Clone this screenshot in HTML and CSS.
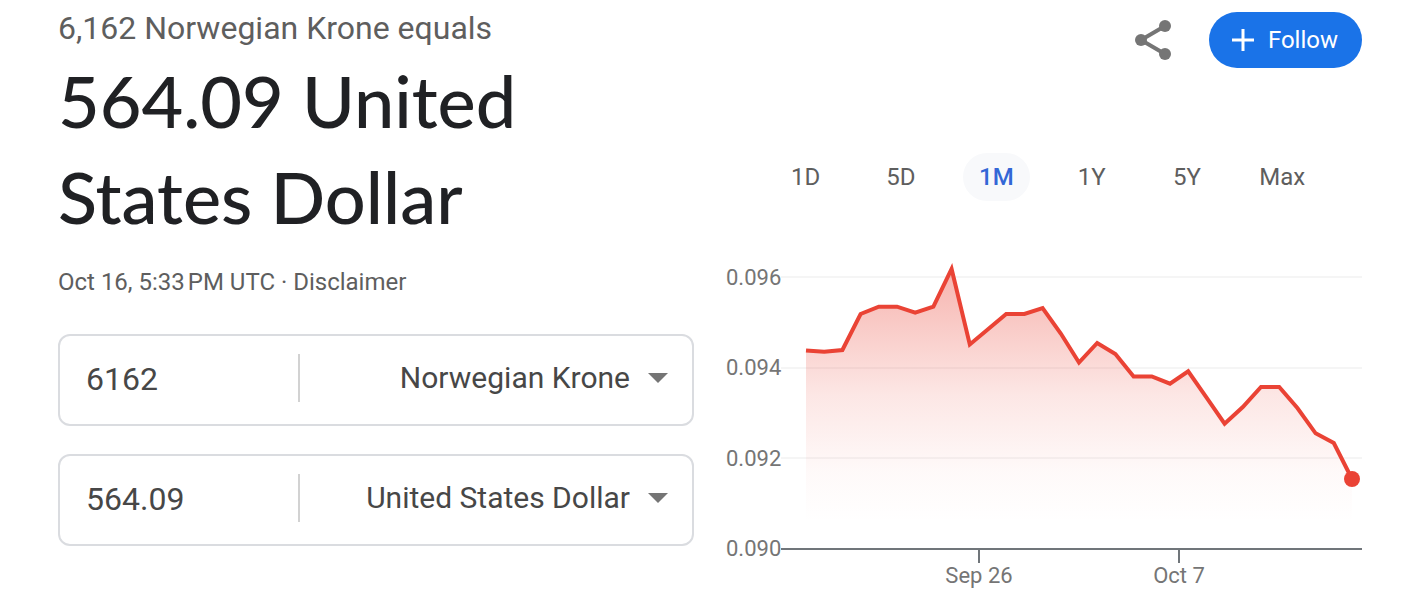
FILE: index.html
```html
<!DOCTYPE html>
<html lang="en">
<head>
  <meta charset="UTF-8">
  <meta name="viewport" content="width=device-width, initial-scale=1.0">
  <title>Currency Converter</title>
  <link rel="stylesheet" href="styles.css">
</head>
<body>

  <main class="converter">

    <!-- Result and inputs -->
    <section class="result">
      <div class="source">6,162 Norwegian Krone equals</div>
      <h1>564.09 United States Dollar</h1>
      <div class="updated">Oct 16, 5:33&#8239;PM UTC · <a href="#">Disclaimer</a></div>

      <form class="fields">
        <div class="field">
          <input type="text" value="6162" aria-label="Amount in Norwegian Krone">
          <select aria-label="From currency">
            <option>Norwegian Krone</option>
            <option>United States Dollar</option>
          </select>
          <svg class="caret" viewBox="0 0 20 10"><path d="M0 0h20L10 10z"/></svg>
        </div>
        <div class="field">
          <input type="text" value="564.09" aria-label="Amount in United States Dollar">
          <select aria-label="To currency">
            <option>United States Dollar</option>
            <option>Norwegian Krone</option>
          </select>
          <svg class="caret" viewBox="0 0 20 10"><path d="M0 0h20L10 10z"/></svg>
        </div>
      </form>
    </section>

    <!-- History chart -->
    <section class="history">
      <div class="actions">
        <button class="share" type="button" aria-label="Share">
          <svg viewBox="0 0 36 40">
            <path d="M30 6L6 20l24 14" fill="none" stroke="#757575" stroke-width="4"/>
            <circle cx="6" cy="20" r="6"/>
            <circle cx="30" cy="6" r="6"/>
            <circle cx="30" cy="34" r="6"/>
          </svg>
        </button>
        <button class="follow" type="button">
          <svg viewBox="0 0 22 22"><path d="M11 0v22M0 11h22"/></svg>
          Follow
        </button>
      </div>

      <div class="ranges">
        <button type="button">1D</button>
        <button type="button">5D</button>
        <button type="button" class="active">1M</button>
        <button type="button">1Y</button>
        <button type="button">5Y</button>
        <button type="button">Max</button>
      </div>

      <svg class="chart" viewBox="0 0 636 346" role="img" aria-label="NOK to USD, last month">
        <defs>
          <linearGradient id="fade" gradientUnits="userSpaceOnUse" x1="0" y1="18" x2="0" y2="272">
            <stop offset="0" stop-color="#ea4335" stop-opacity="0.4"/>
            <stop offset="0.5" stop-color="#ea4335" stop-opacity="0.13"/>
            <stop offset="0.8" stop-color="#ea4335" stop-opacity="0.03"/>
            <stop offset="1" stop-color="#ea4335" stop-opacity="0"/>
          </linearGradient>
        </defs>
        <path class="grid" d="M55 27H636M55 118H636M55 208H636"/>
        <path fill="url(#fade)" d="M80 100.4L98.2 101.8L116.4 100L134.6 64L152.8 56.7L171 56.7L189.2 62.7L207.4 56.7L225.6 19L243.8 94.5L262 79.3L280.2 64L298.4 64L316.6 58L334.8 83.5L353 112.5L371.2 93L389.4 104L407.6 126.5L425.8 126.5L444 133.7L462.2 121.3L480.4 147.3L498.6 173.7L516.8 157L535 137L553.2 137L571.4 158L589.6 183.3L607.8 193L626 229V298H80Z"/>
        <path class="line" d="M80 100.4L98.2 101.8L116.4 100L134.6 64L152.8 56.7L171 56.7L189.2 62.7L207.4 56.7L225.6 19L243.8 94.5L262 79.3L280.2 64L298.4 64L316.6 58L334.8 83.5L353 112.5L371.2 93L389.4 104L407.6 126.5L425.8 126.5L444 133.7L462.2 121.3L480.4 147.3L498.6 173.7L516.8 157L535 137L553.2 137L571.4 158L589.6 183.3L607.8 193L626 229"/>
        <circle class="dot" cx="626" cy="229" r="8"/>
        <path class="axis" d="M55 299H636M253 299V313M453 299V313"/>
        <text x="0" y="35">0.096</text>
        <text x="0" y="125">0.094</text>
        <text x="0" y="216">0.092</text>
        <text x="0" y="306">0.090</text>
        <text x="253" y="333" text-anchor="middle">Sep 26</text>
        <text x="453" y="333" text-anchor="middle">Oct 7</text>
      </svg>
    </section>

  </main>

</body>
</html>
```
FILE: styles.css
```css
* {
  box-sizing: border-box;
}

body {
  margin: 0;
  font-family: Roboto, Arial, sans-serif;
  font-size: 24px;
  line-height: 32px;
  background: #fff;
  color: #5e5e5e;
}

button, input, select {
  font-family: inherit;
  margin: 0;
  padding: 0;
  border: none;
  background: none;
}

button {
  cursor: pointer;
}

.converter {
  display: grid;
  grid-template-columns: 1fr 1fr;
  gap: 32px;
  padding: 8px 40px 0 58px;
}

/* Result */
.source {
  font-size: 32px;
  line-height: 40px;
}

h1 {
  margin: 4px 0 22px;
  max-width: 520px;
  font-family: Lato, sans-serif;
  font-size: 72px;
  font-weight: 500;
  line-height: 96px;
  color: #202124;
}

.updated a {
  color: inherit;
  text-decoration: none;
}

.fields {
  display: grid;
  gap: 28px;
  margin-top: 36px;
}

.field {
  display: flex;
  align-items: center;
  height: 92px;
  padding: 0 24px 4px 26px;
  border: 2px solid #dadce0;
  border-radius: 12px;
}

.field input {
  width: 214px;
  height: 48px;
  padding-top: 2px;
  font-size: 32px;
  color: #474747;
  border-right: 2px solid #d2d2d2;
}

.field select {
  flex: 1;
  min-width: 0;
  height: 48px;
  padding-bottom: 2px;
  appearance: none;
  font-size: 30px;
  color: #474747;
  text-align: right;
  text-align-last: right;
}

.caret {
  width: 20px;
  height: 10px;
  margin-left: 18px;
  fill: #757575;
}

/* Chart side */
.actions {
  display: flex;
  justify-content: flex-end;
  align-items: center;
  gap: 38px;
  margin-top: 4px;
}

.share svg {
  display: block;
  width: 36px;
  height: 40px;
  fill: #757575;
}

.follow {
  display: flex;
  align-items: center;
  gap: 14px;
  height: 56px;
  padding: 0 24px 0 23px;
  border-radius: 28px;
  background: #1a73e8;
  color: #fff;
  font-size: 24px;
}

.follow svg {
  width: 22px;
  height: 22px;
  stroke: #fff;
  stroke-width: 3;
}

.ranges {
  display: grid;
  grid-template-columns: repeat(6, 1fr);
  justify-items: center;
  margin-top: 85px;
  padding: 0 32px;
}

.ranges button {
  height: 48px;
  padding: 0 16px;
  border-radius: 24px;
  font-size: 24px;
  color: #5e5e5e;
}

.ranges .active {
  background: #f8f9fb;
  color: #3367d6;
  font-weight: 500;
}

.chart {
  display: block;
  width: 100%;
  height: auto;
  margin-top: 49px;
}

.chart text {
  font-size: 22px;
  fill: #757575;
}

.chart .grid {
  stroke: #f5f5f5;
  stroke-width: 2;
}

.chart .line {
  fill: none;
  stroke: #ea4335;
  stroke-width: 4;
}

.chart .dot {
  fill: #ea4335;
}

.chart .axis {
  fill: none;
  stroke: #70757a;
  stroke-width: 2;
}

@media (max-width: 900px) {
  .converter {
    grid-template-columns: 1fr;
    padding: 8px 24px;
  }
}
```
